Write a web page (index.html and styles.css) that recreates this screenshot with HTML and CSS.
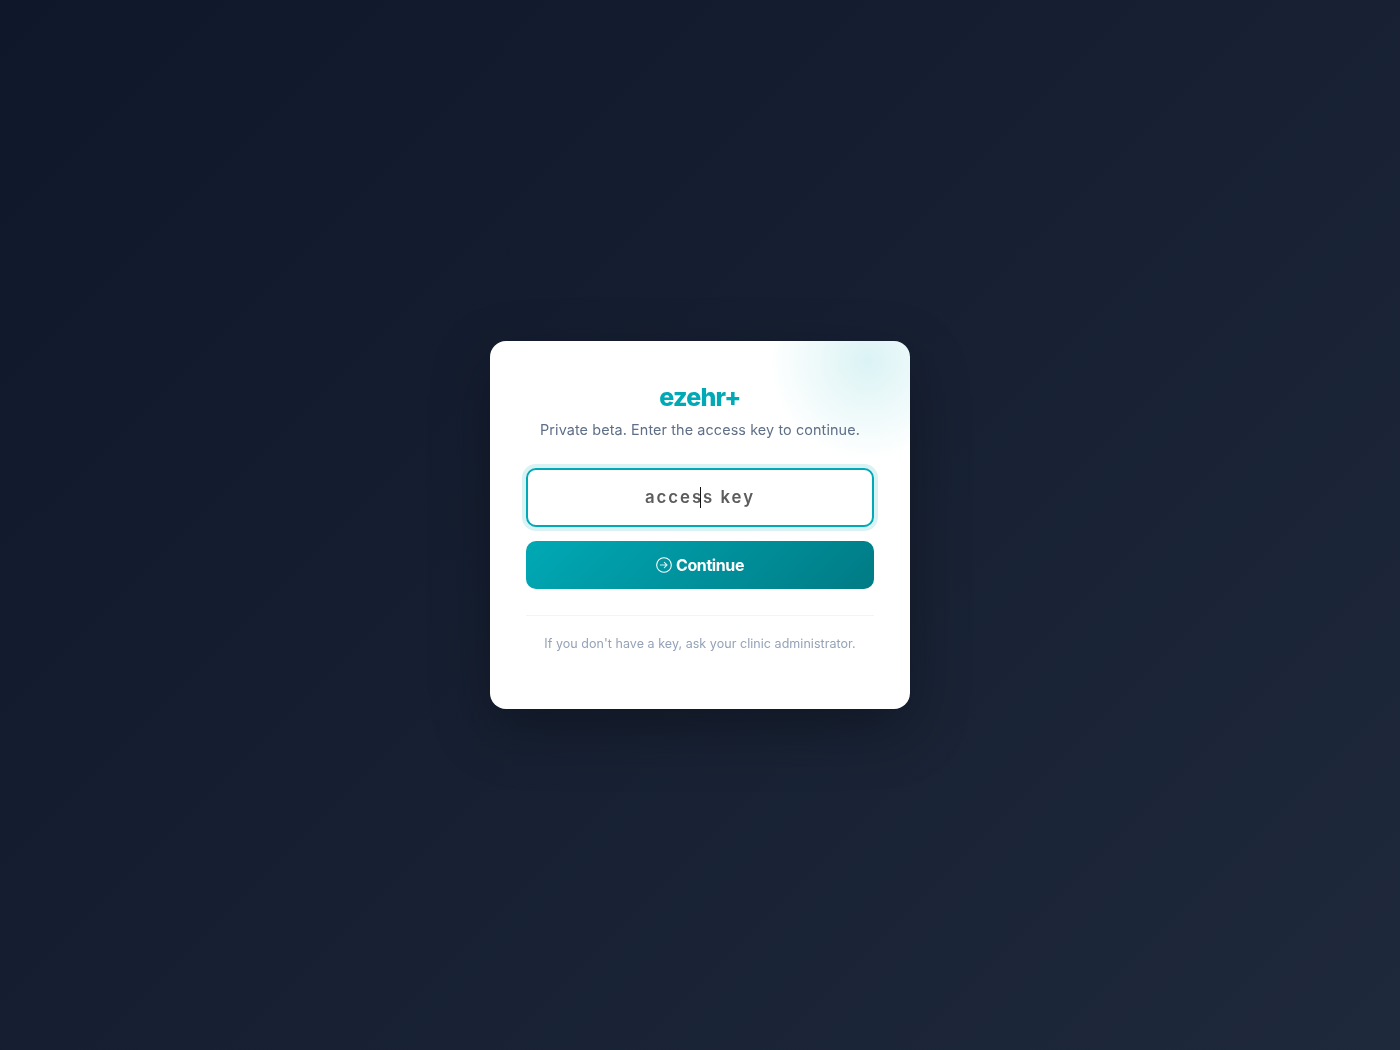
FILE: index.html
```html
<!DOCTYPE html>
<html lang="en">
<head>
<meta charset="utf-8">
<title>ezehr+</title>
<link rel="stylesheet" href="styles.css">
</head>
<body>
<main class="page">
  <section class="card">
    <div class="glow"></div>
    <h1 class="logo">ezehr+</h1>
    <p class="subtitle">Private beta. Enter the access key to continue.</p>
    <div class="field">
      <input class="key-input" type="text" placeholder="access key" aria-label="Access key">
      <span class="caret"></span>
    </div>
    <button class="continue" type="button">
      <svg class="icon" viewBox="0 0 24 24" fill="none" stroke="currentColor" stroke-width="1.6" stroke-linecap="round" stroke-linejoin="round"><circle cx="12" cy="12" r="11"/><path d="M6.5 12h10M12.5 8l4 4-4 4" opacity=".85"/></svg>
      <span>Continue</span>
    </button>
    <hr class="divider">
    <p class="note">If you don't have a key, ask your clinic administrator.</p>
  </section>
</main>
</body>
</html>
```
FILE: styles.css
```css
* { box-sizing: border-box; }
html, body { margin: 0; height: 100%; }
body {
  font-family: Inter, "Liberation Sans", sans-serif;
  background: linear-gradient(135deg, #0f172a 0%, #1e293b 100%);
}
.page {
  height: 100vh;
  display: flex;
  align-items: center;
  justify-content: center;
}
.card {
  position: relative;
  overflow: hidden;
  width: 420px;
  height: 368px;
  padding: 40px 36px;
  background: #fff;
  border-radius: 16px;
  box-shadow: 0 20px 60px rgba(0, 0, 0, 0.3);
  text-align: center;
  will-change: transform;
}
.glow {
  position: absolute;
  top: -80px;
  right: -58px;
  width: 200px;
  height: 200px;
  border-radius: 50%;
  background: radial-gradient(circle, rgba(0, 169, 181, 0.14) 0%, rgba(0, 169, 181, 0) 70%);
}
.logo {
  position: relative;
  margin: 0;
  font-size: 25px;
  line-height: 32px;
  font-weight: 800;
  letter-spacing: -0.8px;
  color: #00a9b5;
}
.subtitle {
  position: relative;
  margin: 7px 0 0;
  font-size: 14.4px;
  line-height: 20px;
  letter-spacing: 0.1px;
  color: #5f6f88;
}
.field {
  position: relative;
  margin-top: 28px;
}
.key-input {
  display: block;
  width: 100%;
  height: 59px;
  padding-bottom: 2px;
  border: 2px solid #00a9b5;
  border-radius: 10px;
  outline: none;
  background: #fff;
  box-shadow: 0 0 0 4px rgba(0, 169, 181, 0.15);
  text-align: center;
  font: 600 16.8px Inter, "Liberation Sans", sans-serif;
  letter-spacing: 1.95px;
  color: #1e293b;
}
.key-input::placeholder { color: #5c5c5c; opacity: 1; }
.caret {
  position: absolute;
  left: 174px;
  top: 19px;
  width: 1px;
  height: 21px;
  background: #111;
}
.continue {
  display: flex;
  align-items: center;
  justify-content: center;
  gap: 4px;
  width: 100%;
  height: 48px;
  margin-top: 14px;
  border: 0;
  border-radius: 10px;
  background: linear-gradient(135deg, #00a9b5 0%, #007b85 100%);
  color: #fff;
  font: 700 16px Inter, "Liberation Sans", sans-serif;
  letter-spacing: -0.4px;
}
.icon { width: 16px; height: 16px; }
.divider {
  height: 1px;
  margin: 26px 0 0;
  border: 0;
  background: #f1f5f9;
}
.note {
  margin: 20px 0 0;
  font-size: 12.5px;
  line-height: 16px;
  letter-spacing: 0.05px;
  color: #94a3b8;
}
```
